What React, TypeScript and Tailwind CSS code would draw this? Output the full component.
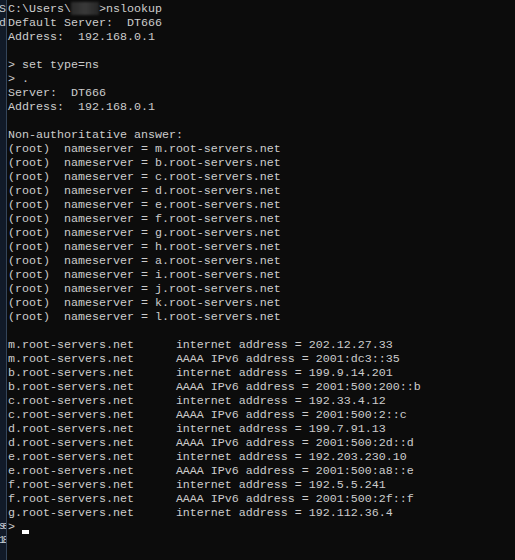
const nameservers = ["m", "b", "c", "d", "e", "f", "g", "h", "a", "i", "j", "k", "l"];

const addresses: [string, string][] = [
  ["m", "internet address = 202.12.27.33"],
  ["m", "AAAA IPv6 address = 2001:dc3::35"],
  ["b", "internet address = 199.9.14.201"],
  ["b", "AAAA IPv6 address = 2001:500:200::b"],
  ["c", "internet address = 192.33.4.12"],
  ["c", "AAAA IPv6 address = 2001:500:2::c"],
  ["d", "internet address = 199.7.91.13"],
  ["d", "AAAA IPv6 address = 2001:500:2d::d"],
  ["e", "internet address = 192.203.230.10"],
  ["e", "AAAA IPv6 address = 2001:500:a8::e"],
  ["f", "internet address = 192.5.5.241"],
  ["f", "AAAA IPv6 address = 2001:500:2f::f"],
  ["g", "internet address = 192.112.36.4"],
];

function Line({ children }: { children?: React.ReactNode }) {
  return <div className="h-[14px] whitespace-pre">{children ?? " "}</div>;
}

export default function App() {
  return (
    <div
      className="flex w-[515px] h-[560px] bg-[#0c0c0c] text-[#cccccc] text-[11.67px] leading-[14px] overflow-hidden"
      style={{ fontFamily: '"Liberation Mono", "DejaVu Sans Mono", monospace' }}
    >
      {/* strip of the window behind */}
      <div className="w-[7px] shrink-0 pt-[2px] bg-[#111a28] border-r border-[#34455a] text-[#c8ccd2] flex flex-col items-end overflow-hidden">
        <div className="h-[14px] whitespace-pre">S</div>
        <div className="h-[14px] whitespace-pre">d</div>
        <div className="h-[490px]" />
        <div className="h-[14px] whitespace-pre text-[10px] tracking-[-2.5px]">se</div>
        <div className="h-[14px] whitespace-pre text-[10px] tracking-[-2.5px]">18</div>
      </div>

      <div className="flex-1 pl-px pt-[2px]">
        <Line>
          C:\Users\
          <span className="inline-block align-top w-[28px] h-[13px] bg-gradient-to-r from-[#2a2a2a] via-[#3a3a3a] to-[#262626] blur-[1px]" />
          {">nslookup"}
        </Line>
        <Line>Default Server:  DT666</Line>
        <Line>Address:  192.168.0.1</Line>
        <Line />
        <Line>{"> set type=ns"}</Line>
        <Line>{"> ."}</Line>
        <Line>Server:  DT666</Line>
        <Line>Address:  192.168.0.1</Line>
        <Line />
        <Line>Non-authoritative answer:</Line>
        {nameservers.map((n) => (
          <Line key={n}>{`(root)  nameserver = ${n}.root-servers.net`}</Line>
        ))}
        <Line />
        {addresses.map(([n, text], i) => (
          <Line key={i}>{`${n}.root-servers.net      ${text}`}</Line>
        ))}
        <Line>
          {"> "}
          <span className="inline-block align-top w-[7px] h-[14px] relative">
            <span className="absolute left-0 bottom-0 w-[7px] h-[4px] bg-white" />
          </span>
        </Line>
      </div>
    </div>
  );
}
